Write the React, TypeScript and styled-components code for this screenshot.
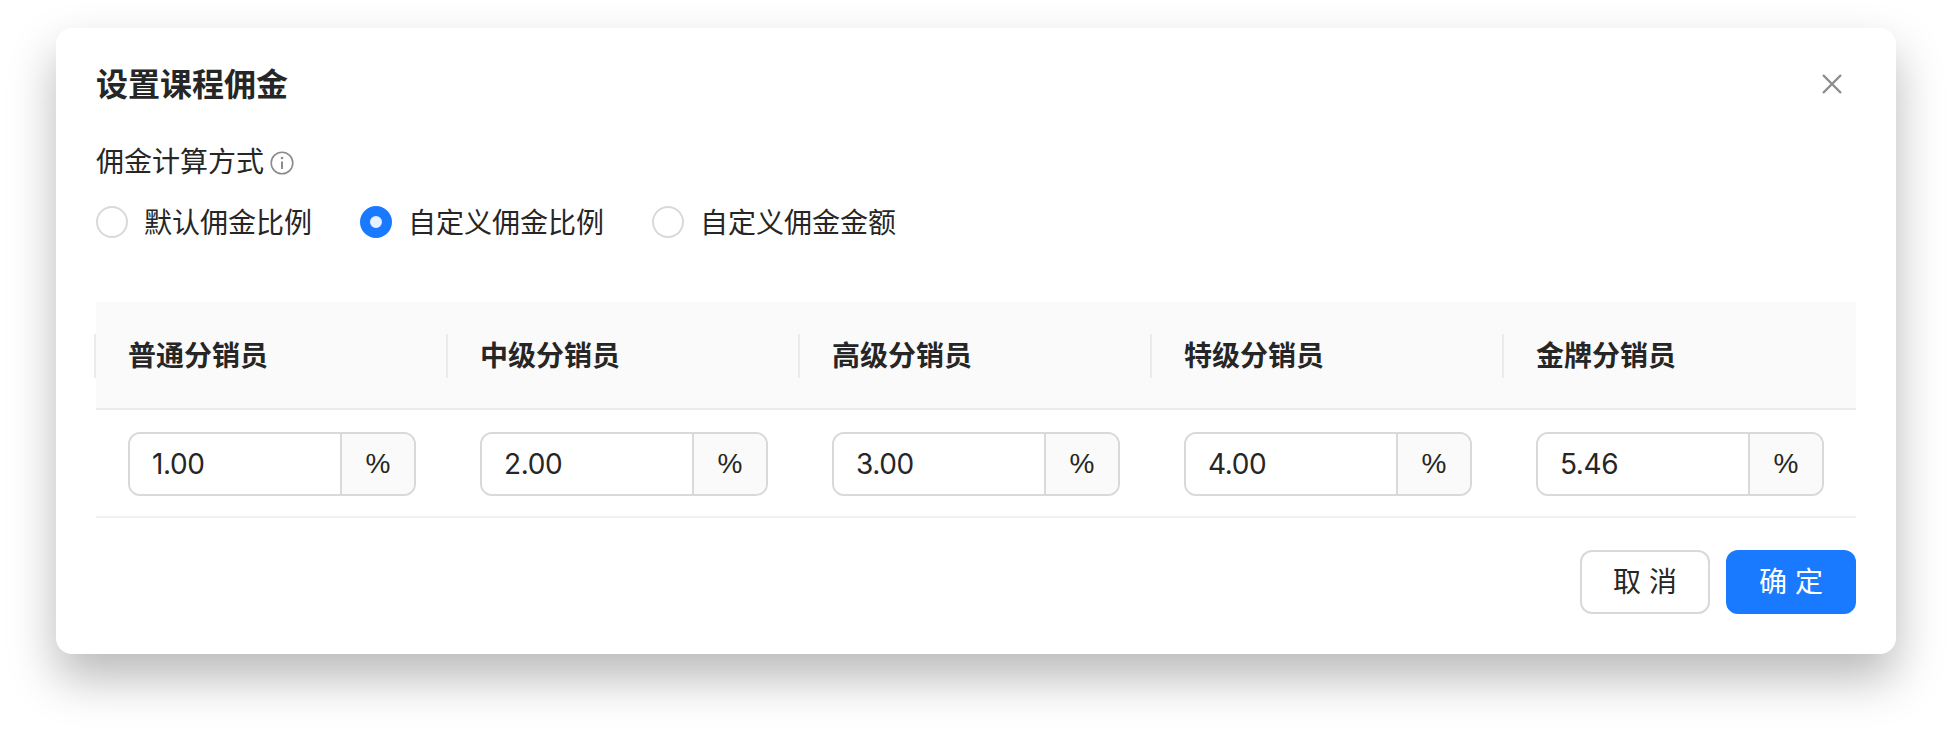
import styled, { createGlobalStyle } from "styled-components";

const levels = [
  { name: "普通分销员", value: "1.00" },
  { name: "中级分销员", value: "2.00" },
  { name: "高级分销员", value: "3.00" },
  { name: "特级分销员", value: "4.00" },
  { name: "金牌分销员", value: "5.46" },
];

const modes = [
  { label: "默认佣金比例", checked: false },
  { label: "自定义佣金比例", checked: true },
  { label: "自定义佣金金额", checked: false },
];

export default function App() {
  return (
    <>
      <GlobalStyle />
      <Page>
        <Dialog>
          <Header>
            <Title>设置课程佣金</Title>
            <CloseButton aria-label="close">
              <svg width="22" height="22" viewBox="0 0 22 22" fill="none">
                <path d="M2 2L20 20M20 2L2 20" stroke="#8c8c8c" strokeWidth="2.4" />
              </svg>
            </CloseButton>
          </Header>
          <FieldLabel>
            佣金计算方式
            <svg width="24" height="24" viewBox="0 0 24 24" fill="none">
              <circle cx="12" cy="12" r="10.8" stroke="#8c8c8c" strokeWidth="1.6" />
              <path d="M12 10.5V18" stroke="#8c8c8c" strokeWidth="2" />
              <circle cx="12" cy="7" r="1.3" fill="#8c8c8c" />
            </svg>
          </FieldLabel>
          <RadioGroup>
            {modes.map((m) => (
              <RadioItem key={m.label}>
                <RadioDot $checked={m.checked} />
                <RadioText>{m.label}</RadioText>
              </RadioItem>
            ))}
          </RadioGroup>
          <Table>
            <thead>
              <tr>
                {levels.map((l) => (
                  <HeadCell key={l.name}>{l.name}</HeadCell>
                ))}
              </tr>
            </thead>
            <tbody>
              <tr>
                {levels.map((l) => (
                  <BodyCell key={l.name}>
                    <InputGroup>
                      <ValueInput readOnly value={l.value} />
                      <Addon>%</Addon>
                    </InputGroup>
                  </BodyCell>
                ))}
              </tr>
            </tbody>
          </Table>
          <Footer>
            <Button>取 消</Button>
            <Button $primary>确 定</Button>
          </Footer>
        </Dialog>
      </Page>
    </>
  );
}

const GlobalStyle = createGlobalStyle`
  html, body {
    margin: 0;
    background: #fff;
  }
  body {
    font-family: "Liberation Sans", "Noto Sans CJK SC", sans-serif;
    color: #262626;
  }
  * {
    box-sizing: border-box;
  }
`;

const Page = styled.div`
  width: 1952px;
  height: 738px;
  padding: 28px 56px;
  overflow: hidden;
`;

const Dialog = styled.div`
  width: 1840px;
  height: 626px;
  padding: 0 40px;
  background: #fff;
  border-radius: 16px;
  box-shadow: 0 24px 48px rgba(0, 0, 0, 0.28);
`;

const Header = styled.div`
  display: flex;
  align-items: center;
  justify-content: space-between;
  height: 115px;
`;

const Title = styled.div`
  font-size: 32px;
  font-weight: 600;
  line-height: 44px;
  margin-top: -1px;
`;

const CloseButton = styled.div`
  display: flex;
  margin-right: 13px;
  margin-top: -4px;
`;

const FieldLabel = styled.div`
  display: flex;
  align-items: center;
  gap: 6px;
  height: 40px;
  font-size: 28px;
  line-height: 40px;
`;

const RadioGroup = styled.div`
  display: flex;
  gap: 48px;
  margin-top: 19px;
`;

const RadioItem = styled.label`
  display: flex;
  align-items: center;
  gap: 16px;
  height: 40px;
  font-size: 28px;
`;

const RadioText = styled.span`
  margin-bottom: 2px;
`;

const RadioDot = styled.span<{ $checked: boolean }>`
  width: 32px;
  height: 32px;
  border-radius: 50%;
  border: ${(p) => (p.$checked ? "10px solid #1a7aff" : "2px solid #d9d9d9")};
  background: ${(p) => (p.$checked ? "#e6f2ff" : "#fff")};
`;

const Table = styled.table`
  width: 1760px;
  margin-top: 60px;
  table-layout: fixed;
  border-collapse: collapse;
`;

const HeadCell = styled.th`
  position: relative;
  height: 107px;
  padding: 0 32px 2px;
  background: #fafafa;
  border-bottom: 2px solid #ebebeb;
  font-size: 28px;
  font-weight: 600;
  text-align: left;

  &::before {
    content: "";
    position: absolute;
    left: -2px;
    top: 32px;
    width: 2px;
    height: 44px;
    background: #ebebeb;
  }
`;

const BodyCell = styled.td`
  height: 108px;
  padding: 2px 32px 0;
  border-bottom: 2px solid #f0f0f0;
`;

const InputGroup = styled.div`
  display: flex;
  width: 288px;
  height: 64px;
  border: 2px solid #d9d9d9;
  border-radius: 12px;
  overflow: hidden;
`;

const ValueInput = styled.input`
  flex: 1;
  min-width: 0;
  padding: 0 22px;
  border: 0;
  outline: 0;
  font-family: "Inter", "Liberation Sans", sans-serif;
  font-size: 28px;
  letter-spacing: -0.4px;
  color: #262626;
`;

const Addon = styled.div`
  display: flex;
  align-items: center;
  justify-content: center;
  width: 74px;
  background: #fafafa;
  border-left: 2px solid #d9d9d9;
  font-size: 28px;
`;

const Footer = styled.div`
  display: flex;
  justify-content: flex-end;
  gap: 16px;
  margin-top: 32px;
`;

const Button = styled.div<{ $primary?: boolean }>`
  display: flex;
  align-items: center;
  justify-content: center;
  width: 130px;
  height: 64px;
  padding-bottom: 4px;
  border-radius: 12px;
  border: 2px solid ${(p) => (p.$primary ? "#1a7aff" : "#d9d9d9")};
  background: ${(p) => (p.$primary ? "#1a7aff" : "#fff")};
  color: ${(p) => (p.$primary ? "#fff" : "#262626")};
  font-size: 28px;
`;
